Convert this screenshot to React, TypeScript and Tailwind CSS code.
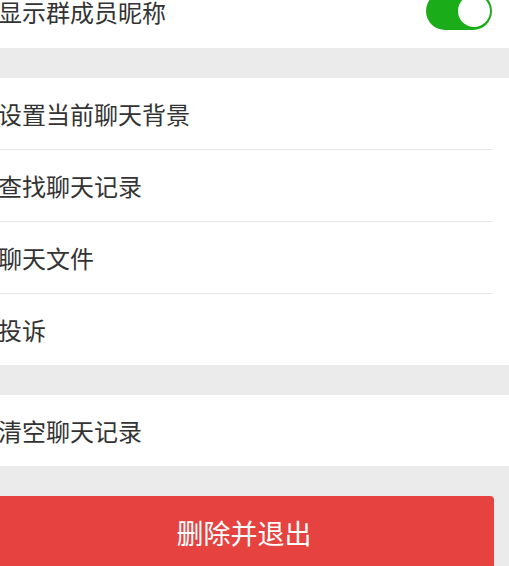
import React from 'react';

const font = { fontFamily: '"Noto Sans CJK SC", "Noto Sans", sans-serif' };

const Row = ({ label, last }: { label: string; last?: boolean }) => (
  <div className="flex flex-col">
    <div className="h-[71px] flex items-center text-[24px] text-[#333333] -ml-[2px]">{label}</div>
    {!last && <div className="h-px bg-[#e5e5e5] mr-[17px]" />}
  </div>
);

const Toggle = () => (
  <div className="w-[66px] h-[38px] -mt-[2px] rounded-full bg-[#1aad19] flex items-center justify-end pr-[2px]">
    <div className="w-[32px] h-[32px] rounded-full bg-white" />
  </div>
);

export default function App() {
  return (
    <div className="min-h-screen bg-[#ebebeb] overflow-hidden" style={font}>
      <div className="-mt-[24px] flex flex-col gap-[30px]">
        <div className="bg-white h-[72px] flex items-center justify-between pr-[17px]">
          <span className="text-[24px] text-[#333333] -ml-[2px]">显示群成员昵称</span>
          <Toggle />
        </div>
        <div className="bg-white flex flex-col">
          <Row label="设置当前聊天背景" />
          <Row label="查找聊天记录" />
          <Row label="聊天文件" />
          <Row label="投诉" last />
        </div>
        <div className="bg-white">
          <Row label="清空聊天记录" last />
        </div>
        <div className="pr-[15px]">
          <button className="w-[500px] -ml-[6px] h-[74px] rounded-[4px] bg-[#e64340] text-white text-[27px] flex items-center justify-center">
            删除并退出
          </button>
        </div>
      </div>
    </div>
  );
}
